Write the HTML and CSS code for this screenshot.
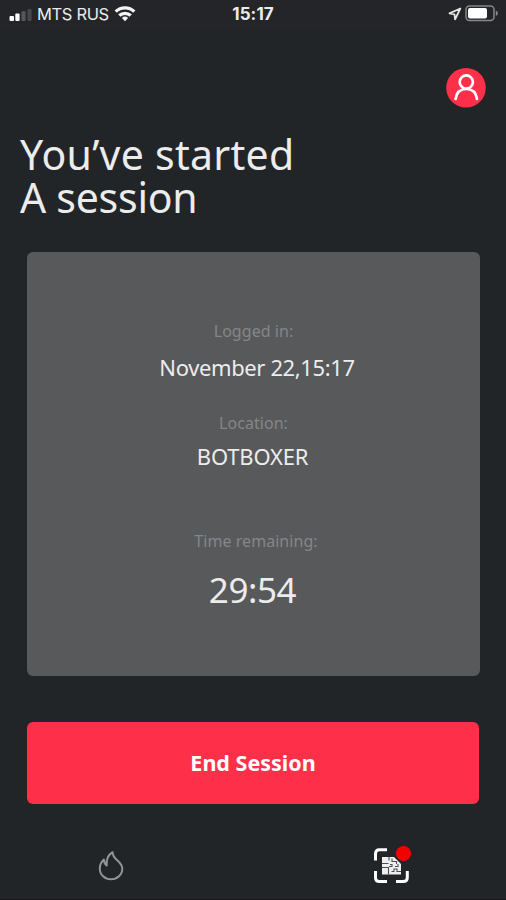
FILE: index.html
```html
<!DOCTYPE html>
<html lang="en">
<head>
<meta charset="utf-8">
<title>Session</title>
<link rel="stylesheet" href="styles.css">
</head>
<body>
<div class="screen">
  <header class="status">
    <div class="status-left">
      <svg class="signal" width="24" height="16" viewBox="0 0 24 16"><rect x="0.5" y="10" width="4.5" height="5" rx="1" fill="#fff"/><rect x="6.3" y="7.500" width="4.3" height="7.5" rx="1" fill="#fff"/><rect x="12.4" y="5.3" width="4.2" height="9.7" rx="1" fill="#55575a"/><rect x="18.4" y="3" width="4.2" height="12" rx="1" fill="#46484b"/></svg>
      <span class="carrier">MTS RUS</span>
      <svg width="22" height="16" viewBox="0 0 22 16" fill="none" stroke="#f4f4f4" stroke-width="3.400"><path d="M1.7 5.600a13.4 13.4 0 0 1 18.6 0"/><path d="M5.3 9.600a8.3 8.3 0 0 1 11.4 0"/><path d="M11 15.2l-3.1-3.3a4.6 4.6 0 0 1 6.2 0z" fill="#f4f4f4" stroke="none"/></svg>
    </div>
    <span class="clock">15:17</span>
    <div class="status-right">
      <svg width="14" height="14" viewBox="0 0 14 14" fill="none" stroke="#e6e6e6" stroke-width="1.8" stroke-linejoin="round"><path d="M12.3 1.5L1.5 6.4l5 .9.6 5z"/></svg>
      <svg width="34" height="18" viewBox="0 0 34 18"><rect x="1" y="1" width="28" height="14.5" rx="3.5" fill="none" stroke="#85878a" stroke-width="1.5"/><rect x="3" y="3" width="19" height="10.5" rx="2" fill="#fff"/><path d="M30.8 5.500q2 .8 2 2.8t-2 2.8z" fill="#85878a"/></svg>
    </div>
  </header>

  <div class="profile-row">
    <svg width="40" height="40" viewBox="0 0 40 40"><circle cx="20" cy="19.800" r="19.8" fill="#fe3049"/><g fill="none" stroke="#fff" stroke-width="2.7" stroke-linecap="round"><circle cx="20.300" cy="14" r="6.6"/><path d="M9.600 31C10.500 24.500 14.500 21 20.300 21s9.800 3.500 10.700 10"/></g></svg>
  </div>

  <h1 class="title"><span class="line-one">You’ve started</span><br><span class="line-two">A session</span></h1>

  <main class="card">
    <div class="label">Logged in:</div>
    <div class="value date">November 22,15:17</div>
    <div class="label location-label">Location:</div>
    <div class="value location">BOTBOXER</div>
    <div class="label time-label">Time remaining:</div>
    <div class="timer">29:54</div>
  </main>

  <button class="end">End Session</button>

  <nav class="tabs">
    <svg width="28" height="32" viewBox="0 0 28 32" fill="none" stroke="#929496" stroke-width="2" stroke-linejoin="round"><path d="M15.600 2.200C11 5 9 8.500 9.700 15.500C7.800 14 6.900 12.300 6.900 9.500C4.200 12 2.800 15 2.800 18.500C2.800 25 7.800 29.300 14 29.300S25.300 25 25.300 18.500C25.300 11.500 15.300 9.500 15.600 2.200Z"/></svg>
    <div class="scan">
      <svg width="36" height="36" viewBox="0 0 36 36"><path d="M2.500 13.500V7Q2.500 2.800 6.500 2.800H14M2.500 24V30.500Q2.500 34.500 6.500 34.500H14M23 34.500H30Q34.300 34.500 34.300 30.500V24" fill="none" stroke="#fff" stroke-width="3"/><path d="M9 10h12l7 7v10.500H9z" fill="#efefef"/><path d="M9 16.500h6.500M16 10v3.500M19 11.500v3h4.500v2.500M9 20.500h6.500v3.500M15.500 24v3.500M17 17.500h2v2h-3M22 19.500h3v-2.500M18.500 24.500h2.500v-2.500h3v2.500h4" fill="none" stroke="#4d5052" stroke-width="1.1"/></svg>
      <span class="badge"></span>
    </div>
  </nav>
</div>
</body>
</html>
```
FILE: styles.css
```css
* { box-sizing: border-box; }
body { margin: 0; background: #212528; }
.screen {
  width: 506px;
  height: 900px;
  display: flex;
  flex-direction: column;
  overflow: hidden;
  background: #212528;
  color: #ececec;
  font-family: "Noto Sans", sans-serif;
  border-bottom: 1px solid #15171b;
}
.status {
  flex: none;
  height: 29px;
  padding: 0 7px 0 9px;
  display: grid;
  grid-template-columns: 1fr auto 1fr;
  align-items: center;
  background: #242529;
  font-family: Inter, sans-serif;
}
.status svg { display: block; }
.status-left { display: flex; align-items: center; height: 27px; align-self: start; }
.signal { margin-right: 4px; }
.carrier { width: 72px; margin-right: 5px; font-size: 16.500px; letter-spacing: -0.35px; white-space: nowrap; }
.clock { height: 27px; align-self: start; line-height: 29px; margin-right: 2px; font-size: 17px; font-weight: 700; letter-spacing: 0.1px; }
.status-right { display: flex; align-items: center; justify-content: flex-end; gap: 3px; height: 28px; align-self: start; }
.profile-row { flex: none; display: flex; justify-content: flex-end; padding: 39px 20px 0; height: 104px; }
.title { flex: none; margin: 0 20px; height: 119px; font-size: 41px; font-weight: 400; line-height: 43px; white-space: nowrap; }
.line-one { letter-spacing: 0.28px; }
.line-two { letter-spacing: -0.25px; }
.card {
  flex: none;
  width: 453px;
  height: 424px;
  margin-left: 27px;
  padding-top: 68px;
  border-radius: 6px;
  background: #58595b;
  text-align: center;
}
.label { color: #858688; font-size: 16px; line-height: 22px; letter-spacing: 0.05px; }
.value { font-size: 22px; line-height: 30px; }
.date { margin-top: 10px; margin-left: 7px; letter-spacing: -0.38px; }
.location-label { margin-top: 30px; }
.location { margin-top: 7px; margin-right: 2px; letter-spacing: -0.2px; }
.time-label { margin-top: 59px; margin-left: 5px; }
.timer { margin-top: 16px; margin-right: 2px; font-size: 35px; line-height: 44px; letter-spacing: -0.4px; }
.end {
  flex: none;
  width: 452px;
  height: 82px;
  margin: 46px 0 0 27px;
  padding: 0;
  border: 0;
  border-radius: 6px;
  background: #fe3049;
  color: #fff;
  font: 700 21.500px/30px "Noto Sans", sans-serif;
}
.tabs { flex: none; display: flex; justify-content: space-between; align-items: flex-start; padding: 43px 97px 0; height: 95px; }
.tabs svg { display: block; }
.tabs > svg { margin-top: 3px; }
.scan { position: relative; }
.badge { position: absolute; top: -1px; right: -2px; width: 15px; height: 15px; border-radius: 50%; background: #f40000; }
```
